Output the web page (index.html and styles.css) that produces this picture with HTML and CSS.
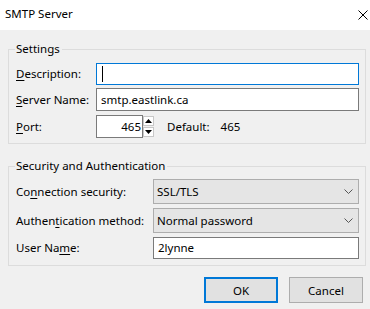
FILE: index.html
```html
<!DOCTYPE html>
<html>
<head>
<meta charset="utf-8">
<link rel="stylesheet" href="styles.css">
</head>
<body>
<div class="window">
  <header class="titlebar">
    <span class="title">SMTP Server</span>
    <svg class="close" width="10" height="10" viewBox="0 0 10 10"><path d="M0.5 0.5 L9.5 9.5 M9.5 0.5 L0.5 9.5" stroke="#000" stroke-width="1" fill="none"/></svg>
  </header>
  <main class="content">
    <fieldset class="group settings">
      <legend class="legend">Settings</legend>
      <div class="row r1">
        <span class="label"><u>D</u>escription:</span>
        <div class="field text focused"><span class="caret"></span></div>
      </div>
      <div class="row r2">
        <span class="label"><u>S</u>erver Name:</span>
        <div class="field text">smtp.eastlink.ca</div>
      </div>
      <div class="row r3">
        <span class="label"><u>P</u>ort:</span>
        <div class="field port">465</div>
        <div class="spinner">
          <span class="spin up"><svg width="7" height="4" viewBox="0 0 7 4"><path d="M0 4 L3.5 0 L7 4 Z" fill="#000"/></svg></span>
          <span class="spin down"><svg width="7" height="4" viewBox="0 0 7 4"><path d="M0 0 L3.5 4 L7 0 Z" fill="#000"/></svg></span>
        </div>
        <span class="default-label">Default:</span>
        <span class="default-value">465</span>
      </div>
    </fieldset>
    <fieldset class="group security">
      <legend class="legend">Security and Authentication</legend>
      <div class="row s1">
        <span class="label wide">Co<u>n</u>nection security:</span>
        <div class="field select">SSL/TLS<svg class="chev" width="9" height="5" viewBox="0 0 9 5"><path d="M0.5 0.5 L4.5 4.5 L8.5 0.5" stroke="#555" fill="none"/></svg></div>
      </div>
      <div class="row s2">
        <span class="label wide">Authen<u>t</u>ication method:</span>
        <div class="field select">Normal password<svg class="chev" width="9" height="5" viewBox="0 0 9 5"><path d="M0.5 0.5 L4.5 4.5 L8.5 0.5" stroke="#555" fill="none"/></svg></div>
      </div>
      <div class="row s3">
        <span class="label wide">User Na<u>m</u>e:</span>
        <div class="field text">2lynne</div>
      </div>
    </fieldset>
    <div class="buttons">
      <button class="btn default">OK</button>
      <button class="btn">Cancel</button>
    </div>
  </main>
</div>
</body>
</html>
```

FILE: styles.css
```css
* { box-sizing: border-box; }
html, body { margin: 0; padding: 0; }
body {
  width: 370px;
  height: 309px;
  overflow: hidden;
  background: #f0f0f0;
  font-family: "Noto Sans", "DejaVu Sans", sans-serif;
  font-size: 11.5px;
  color: #000;
}
.window { width: 370px; height: 309px; background: #f0f0f0; }
.titlebar {
  height: 30px;
  background: #fff;
  display: flex;
  align-items: center;
  justify-content: space-between;
  padding: 0 2px 0 5px;
}
.title { font-size: 11.5px; line-height: 16px; margin-top: -2px; }
.close { display: block; margin-top: -1px; }
.content { padding: 0 4px 0 8px; }
.group {
  margin: 0;
  border: 1px solid #dcdcdc;
  padding: 6px 6px 5px 7px;
  min-width: 0;
}
.settings { margin-top: 11px; }
.security { margin-top: 14px; padding-top: 5px; padding-bottom: 6px; }
.legend {
  padding: 0 2px 0 1px;
  margin-left: -1px;
  line-height: 16px;
  font-size: 11.5px;
}
.row { display: flex; align-items: center; }
.r2 { margin-top: 3px; }
.r3 { margin-top: 4px; }
.s2, .s3 { margin-top: 4px; }
.label { width: 80px; flex: none; line-height: 16px; }
.label.wide { width: 137px; }
u { text-decoration-thickness: 1px; text-underline-offset: 2px; }
.field {
  flex: 1;
  height: 22px;
  line-height: 20px;
  background: #fff;
  border: 1px solid #7a7a7a;
  padding: 0 4px;
  white-space: nowrap;
  position: relative;
}
.r2 .field, .r3 .field { height: 23px; line-height: 21px; }
.field.focused { border-color: #0078d7; }
.caret {
  position: absolute;
  left: 5px;
  top: 2px;
  width: 1px;
  height: 16px;
  background: #000;
}
.field.port {
  flex: none;
  width: 47px;
  text-align: right;
  padding: 0 1px 0 0;
}
.spinner {
  width: 11px;
  height: 23px;
  display: flex;
  flex-direction: column;
  gap: 1px;
  padding: 1px 0;
}
.spin {
  flex: 1;
  display: flex;
  align-items: center;
  justify-content: center;
  background: #fff;
  border: 1px solid #c8c8c8;
}
.spin svg { display: block; }
.default-label { margin-left: 13px; }
.default-value { margin-left: 11px; }
.field.select {
  height: 25px;
  line-height: 23px;
  background: #e5e5e5;
  border-color: #adadad;
  padding-left: 3px;
  display: flex;
  align-items: center;
  justify-content: space-between;
  padding-right: 5px;
}
.chev { display: block; }
.buttons {
  display: flex;
  justify-content: flex-end;
  gap: 11px;
  margin-top: 11px;
  padding-right: 3px;
}
.btn {
  width: 74px;
  height: 26px;
  background: #e1e1e1;
  border: 1px solid #adadad;
  font-family: inherit;
  font-size: 11.5px;
  color: #000;
  padding: 0;
}
.btn.default { border: 2px solid #0078d7; }
```
